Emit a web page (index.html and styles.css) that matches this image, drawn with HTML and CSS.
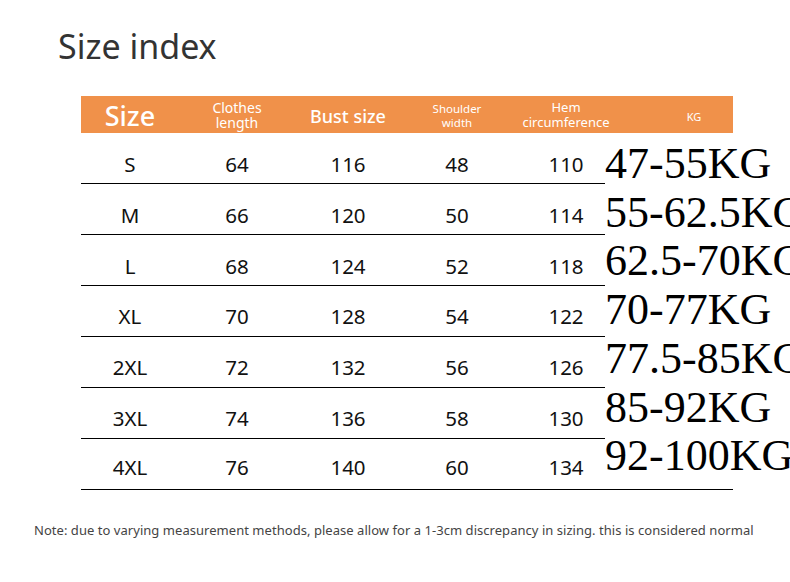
FILE: index.html
```html
<!DOCTYPE html>
<html lang="en">
<head>
<meta charset="utf-8">
<title>Size index</title>
<link rel="stylesheet" href="styles.css">
</head>
<body>
<div class="page">
  <h1 class="title">Size index</h1>
  <div class="table">
    <div class="head">
      <div class="hc h-size">Size</div>
      <div class="hc h-length"><div>Clothes</div><div>length</div></div>
      <div class="hc h-bust">Bust size</div>
      <div class="hc h-shoulder"><div>Shoulder</div><div>width</div></div>
      <div class="hc h-hem"><div>Hem</div><div>circumference</div></div>
      <div class="hc h-kg">KG</div>
    </div>
    <div class="body">
      <div class="rows">
        <div class="row"><span>S</span><span>64</span><span>116</span><span>48</span><span class="c5">110</span></div>
        <div class="row"><span>M</span><span>66</span><span>120</span><span>50</span><span class="c5">114</span></div>
        <div class="row"><span>L</span><span>68</span><span>124</span><span>52</span><span class="c5">118</span></div>
        <div class="row"><span>XL</span><span>70</span><span>128</span><span>54</span><span class="c5">122</span></div>
        <div class="row"><span>2XL</span><span>72</span><span>132</span><span>56</span><span class="c5">126</span></div>
        <div class="row"><span>3XL</span><span>74</span><span>136</span><span>58</span><span class="c5">130</span></div>
        <div class="row"><span>4XL</span><span>76</span><span>140</span><span>60</span><span class="c5">134</span></div>
      </div>
      <div class="kgcol">
        <div>47-55KG</div>
        <div>55-62.5KG</div>
        <div>62.5-70KG</div>
        <div>70-77KG</div>
        <div>77.5-85KG</div>
        <div>85-92KG</div>
        <div>92-100KG</div>
      </div>
    </div>
  </div>
  <p class="note">Note: due to varying measurement methods, please allow for a 1-3cm discrepancy in sizing. this is considered normal</p>
</div>
</body>
</html>
```
FILE: styles.css
```css
html, body {
  margin: 0;
  padding: 0;
  background: #ffffff;
  overflow: hidden;
}
body {
  width: 790px;
  height: 582px;
  font-family: "Noto Sans", "Open Sans", sans-serif;
}
.page {
  padding-top: 26px;
}
.title {
  margin: 0 0 0 58px;
  font-size: 34px;
  line-height: 40px;
  font-weight: 400;
  color: #333333;
  height: 70px;
}
.table {
  margin-left: 81px;
  width: 652px;
}
.head {
  height: 37px;
  background: #f0914a;
  color: #ffffff;
  display: grid;
  grid-template-columns: 98px 116px 106px 112px 106px 114px;
  align-items: center;
}
.hc {
  text-align: center;
  white-space: nowrap;
}
.h-size {
  font-size: 27px;
  line-height: 30px;
  padding-top: 3px;
  font-weight: 500;
}
.h-length {
  font-size: 14px;
  line-height: 15.5px;
  padding-top: 1px;
}
.h-bust {
  font-size: 18px;
  line-height: 20px;
  padding-top: 3px;
  font-weight: 500;
}
.h-shoulder {
  font-size: 11.5px;
  line-height: 14px;
  padding-top: 2px;
}
.h-hem {
  font-size: 13px;
  line-height: 15px;
  padding-top: 1px;
}
.h-kg {
  font-size: 11px;
  line-height: 14px;
  padding-left: 36px;
  padding-top: 4px;
}
.body {
  display: flex;
  border-bottom: 1px solid #000000;
}
.rows {
  width: 524px;
  flex: none;
}
.row {
  height: 51px;
  box-sizing: border-box;
  padding-top: 11px;
  display: grid;
  grid-template-columns: 98px 116px 106px 112px 92px;
  align-items: center;
  border-bottom: 1px solid #000000;
  font-size: 20.5px;
  color: #111111;
}
.row:nth-child(n+4) {
  padding-top: 9px;
}
.row:last-child {
  border-bottom: none;
  height: 50px;
  padding-top: 6px;
}
.row span {
  text-align: center;
}
.row .c5 {
  padding-left: 14px;
}
.kgcol {
  padding-top: 7px;
  font-family: "Liberation Serif", "Times New Roman", serif;
  font-size: 44px;
  line-height: 48.7px;
  color: #000000;
  white-space: nowrap;
}
.note {
  margin: 32px 0 0 34px;
  font-size: 13px;
  line-height: 16px;
  color: #444444;
  white-space: nowrap;
  letter-spacing: 0.04px;
}
```
